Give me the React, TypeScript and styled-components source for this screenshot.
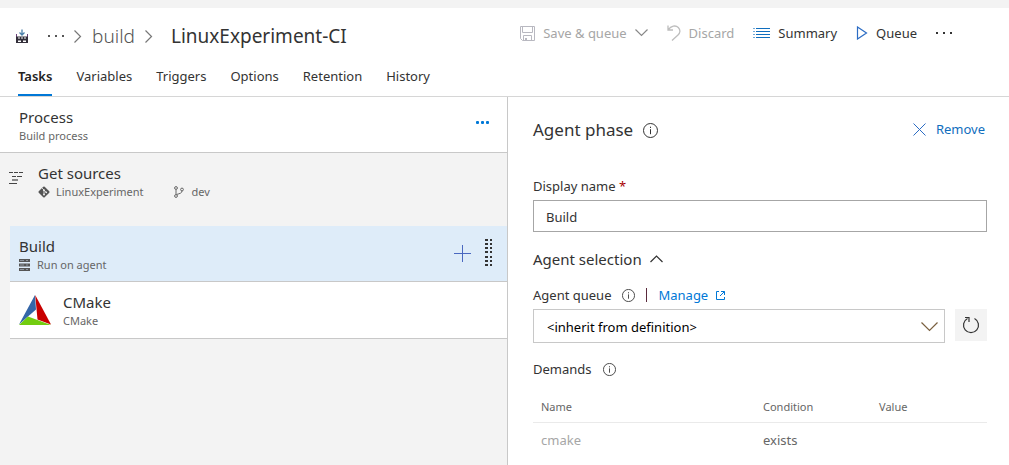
import React from "react";
import styled, { createGlobalStyle, css } from "styled-components";

const GlobalStyle = createGlobalStyle`
  *, *::before, *::after { box-sizing: border-box; }
  body {
    margin: 0;
    background: #f3f3f3;
    color: #333;
    font-family: "Segoe UI", "Noto Sans", "Open Sans", sans-serif;
    font-size: 13px;
    line-height: 20px;
  }
  button, input, select { font: inherit; color: inherit; }
  svg { display: block; flex: none; }
`;

const Page = styled.div`
  min-height: 100vh;
  display: flex;
  flex-direction: column;
  padding-top: 8px;
`;

const Header = styled.header`
  background: #fff;
  border-bottom: 1px solid #d6d6d6;
`;

const TitleBar = styled.div`
  display: flex;
  justify-content: space-between;
  align-items: center;
  height: 56px;
  padding: 0 57px 0 15px;
`;

const Breadcrumb = styled.nav`
  display: flex;
  align-items: center;
`;

const CrumbLink = styled.a`
  padding: 0 10px;
  color: #555;
  font-size: 19px;
  font-weight: 300;
  line-height: 28px;
  text-decoration: none;
`;

const Title = styled.h1`
  margin: 0 0 0 18px;
  font-size: 19px;
  font-weight: 400;
  line-height: 28px;
`;

const PlainButton = styled.button`
  display: flex;
  align-items: center;
  padding: 0;
  border: 0;
  background: none;
  cursor: pointer;
`;

const CrumbMore = styled(PlainButton)`
  margin: 0 10px 0 19px;
`;

const Toolbar = styled.div`
  display: flex;
  align-items: center;
  gap: 19px;
  padding-bottom: 6px;
`;

const ToolButton = styled(PlainButton)`
  gap: 8px;
  color: #333;
  &:disabled { color: #a6a6a6; cursor: default; }
`;

const Tabs = styled.nav`
  display: flex;
  gap: 24px;
  height: 32px;
  padding-left: 18px;
`;

const Tab = styled.a<{ $active?: boolean }>`
  padding-top: 2px;
  color: #333;
  text-decoration: none;
  ${(p) => p.$active && css`
    font-weight: 600;
    color: #222;
    border-bottom: 2px solid #0078d7;
  `}
`;

const Main = styled.main`
  flex: 1;
  display: grid;
  grid-template-columns: 508fr 501fr;
`;

const ProcessPane = styled.section`
  border-right: 1px solid #c8c8c8;
`;

const Row = styled.div<{ $selected?: boolean }>`
  display: flex;
  align-items: center;
  height: 56px;
  border-bottom: 1px solid #c8c8c8;
  background: ${(p) => (p.$selected ? "#deecf9" : "#fff")};
`;

const ProcessRow = styled(Row)`
  padding: 0 18px 0 19px;
`;

const ProcessMenu = styled(PlainButton)`
  padding-bottom: 6px;
`;

const SourcesRow = styled.div`
  display: flex;
  align-items: flex-start;
  height: 73px;
  padding: 9px 17px 0 9px;
  gap: 15px;
  > svg { margin-top: 10px; }
`;

const PhaseList = styled.div`
  padding-left: 10px;
`;

const PhaseRow = styled(Row)`
  padding: 0 14px 0 9px;
`;

const TaskRow = styled(PhaseRow)`
  height: 57px;
`;

const RowBody = styled.div`
  flex: 1;
  min-width: 0;
  padding-top: 1px;
`;

const RowTitle = styled.div`
  font-size: 15px;
  line-height: 20px;
`;

const RowMeta = styled.div`
  display: flex;
  align-items: center;
  gap: 6px;
  padding-top: 1px;
  color: #666;
  font-size: 11px;
  line-height: 16px;
`;

const Branch = styled.span`
  display: flex;
  align-items: center;
  gap: 8px;
  margin-left: 24px;
`;

const RowActions = styled.div`
  display: flex;
  align-items: center;
  gap: 14px;
`;

const TaskLogo = styled.div`
  margin-right: 12px;
`;

const Details = styled.section`
  padding: 21px 22px 0 25px;
  background: #fff;
`;

const DetailsHead = styled.div`
  display: flex;
  justify-content: space-between;
  align-items: center;
  height: 24px;
  margin-bottom: 34px;
`;

const HeadGroup = styled.div`
  display: flex;
  align-items: center;
  gap: 10px;
`;

const PhaseTitle = styled.h2`
  margin: 0;
  font-size: 17px;
  font-weight: 400;
  line-height: 24px;
`;

const RemoveButton = styled(PlainButton)`
  gap: 10px;
  padding: 0 2px 2px 0;
  color: #106ebe;
`;

const FieldLabel = styled.label`
  display: block;
`;

const Required = styled.span`
  color: #a80000;
`;

const TextInput = styled.input`
  display: block;
  width: 100%;
  height: 32px;
  margin-top: 4px;
  padding: 1px 12px 0;
  border: 1px solid #a6a6a6;
  border-radius: 0;
  background: #fff;
`;

const SectionToggle = styled(PlainButton)`
  gap: 8px;
  margin: 17px 0 16px;
  font-size: 15px;
  line-height: 20px;
`;

const LabelLine = styled.div`
  display: flex;
  align-items: center;
  gap: 11px;
`;

const Divider = styled.span`
  width: 1px;
  height: 14px;
  background: #5a2a3c;
`;

const ManageLink = styled.a`
  display: flex;
  align-items: center;
  gap: 8px;
  color: #0078d7;
  text-decoration: none;
`;

const QueueRow = styled.div`
  display: flex;
  gap: 10px;
  margin: 4px 0 16px;
`;

const SelectWrap = styled.div`
  position: relative;
  flex: 1;
  > svg {
    position: absolute;
    top: 13px;
    right: 7px;
    pointer-events: none;
  }
`;

const QueueSelect = styled.select`
  appearance: none;
  width: 100%;
  height: 34px;
  padding: 1px 32px 0 13px;
  border: 1px solid #c8c8c8;
  border-radius: 0;
  background: #fff;
  color: #000;
`;

const RefreshButton = styled(PlainButton)`
  justify-content: center;
  width: 32px;
  height: 32px;
  background: #f3f3f3;
`;

const DemandsTable = styled.table`
  width: 100%;
  margin-top: 12px;
  border-collapse: collapse;
  table-layout: fixed;
  text-align: left;
  color: #666;
`;

const HeadCell = styled.th<{ $narrow?: boolean }>`
  width: ${(p) => (p.$narrow ? "116px" : "auto")};
  height: 31px;
  padding: 2px 8px 0;
  border-bottom: 1px solid #eaeaea;
  font-size: 11px;
  font-weight: 400;
`;

const Cell = styled.td<{ $muted?: boolean }>`
  height: 35px;
  padding: 0 8px;
  color: ${(p) => (p.$muted ? "#a6a6a6" : "#666")};
`;

const BuildIcon = () => (
  <svg width="14" height="16" viewBox="0 0 14 16">
    <path d="M7 1.500v5M4.500 4.500L7 7l2.500-2.500" fill="none" stroke="#4a7fa8" strokeWidth="1.300" />
    <path d="M1.500 6v3" fill="none" stroke="#6b3f7a" />
    <path d="M12.500 6v3" fill="none" stroke="#6b3f7a" />
    <path fill="#332f3a" fillRule="evenodd" d="M1 8.500h12V15H1zM3 9.500v1h2v-1zM6 9.500v1h2v-1zM9 9.500v1h2v-1zM3 12.500v1.500h3v-1.500zM8 12.500v1.500h3v-1.500z" />
  </svg>
);

const Dots = ({ color, size = 2, gap = 7 }: { color: string; size?: number; gap?: number }) => (
  <svg width={gap * 2 + size} height="4" fill={color}>
    {[0, 1, 2].map((i) => (
      <rect key={i} x={i * gap} y="1" width={size} height={size} rx={size > 2 ? 1 : 0} />
    ))}
  </svg>
);

const Chevron = ({ dir, size, color = "#555" }: { dir: "right" | "down" | "up"; size: number; color?: string }) => {
  const h = size / 2;
  const shapes = {
    right: { w: h + 2, t: size + 1, d: `M.5 .5L${h + 0.5} ${h + 0.5}L.5 ${size + 0.5}` },
    down: { w: size + 1, t: h + 2, d: `M.5 .5L${h + 0.5} ${h + 0.5}L${size + 0.5} .5` },
    up: { w: size + 1, t: h + 2, d: `M.5 ${h + 1}L${h + 0.5} 1L${size + 0.5} ${h + 1}` },
  };
  const s = shapes[dir];
  return (
    <svg width={s.w} height={s.t} fill="none" stroke={color} strokeWidth="1.200">
      <path d={s.d} />
    </svg>
  );
};

const SaveIcon = () => (
  <svg width="15" height="15" viewBox="0 0 15 15" fill="none" stroke="#b8b8c0">
    <path d="M.5 .5h14v14H2.500l-2-2zM2.500 .5v6h10v-6M3.500 14.500v-5h8v5" />
    <path d="M5 12h2v2.500H5z" fill="#b8b8c0" stroke="none" />
  </svg>
);

const UndoIcon = () => (
  <svg width="14" height="16" viewBox="0 0 14 16" fill="none" stroke="#bdbdbd" strokeWidth="1.300">
    <path d="M1 .5v4.500h5M1.300 4.700C4 1 8.500-.2 11.300 2.500c2.500 2.600 1.800 5.500-.3 7.500L5 15.500" />
  </svg>
);

const ListIcon = () => (
  <svg width="17" height="12" viewBox="0 0 17 12" fill="#106ebe">
    {[0, 3, 6, 9].map((y) => (
      <g key={y}>
        <rect x="0" y={y + 1} width="2" height="1" opacity=".6" />
        <rect x="3" y={y + 1} width="14" height="1" />
      </g>
    ))}
  </svg>
);

const PlayIcon = () => (
  <svg width="12" height="14" viewBox="0 0 12 14" fill="none" stroke="#2b6cc4" strokeWidth="1.200">
    <path d="M1.500 1v12L10.500 7z" />
  </svg>
);

const SourcesIcon = () => (
  <svg width="14" height="12" viewBox="0 0 14 12" fill="none" stroke="#444">
    <path d="M0 .5h4M5 .5h4M10 .5h4M3 4.500h4M8 4.500h5" />
    <path d="M3 8h6" stroke="#888" strokeWidth="2" />
    <path d="M0 11.500h8" />
  </svg>
);

const GitIcon = () => (
  <svg width="12" height="12" viewBox="0 0 12 12">
    <rect x="1.800" y="1.800" width="8.400" height="8.400" rx="1" transform="rotate(45 6 6)" fill="#555" />
    <path d="M4 2L6 4v5M6 4.200L8.200 6.300" stroke="#f3f3f3" strokeWidth=".8" fill="none" />
    <circle cx="6" cy="4.200" r=".9" fill="#f3f3f3" />
    <circle cx="6" cy="8.500" r=".9" fill="#f3f3f3" />
    <circle cx="8.200" cy="6.300" r=".9" fill="#f3f3f3" />
  </svg>
);

const BranchIcon = () => (
  <svg width="10" height="12" viewBox="0 0 10 12" fill="none" stroke="#666">
    <circle cx="2" cy="2" r="1.400" />
    <circle cx="2" cy="10" r="1.400" />
    <circle cx="8" cy="3.500" r="1.400" />
    <path d="M2 3.500v5M8 5c0 2-2 2.500-5.500 3.500" />
  </svg>
);

const ServerIcon = () => (
  <svg width="12" height="12" viewBox="0 0 12 12" fill="#555">
    <path d="M0 0h11v3H0zM0 4.500h11v3H0zM0 9h11v3H0z" />
    <path d="M1 1h4v1H1zM7 1h2v1H7zM1 5.500h4v1H1zM7 5.500h2v1H7zM1 10h4v1H1zM7 10h2v1H7z" fill="#8d959d" />
  </svg>
);

const PlusIcon = () => (
  <svg width="17" height="17" viewBox="0 0 17 17" stroke="#4a68c0">
    <path d="M8.500 0v17M0 8.500h17" />
  </svg>
);

const GripIcon = () => (
  <svg width="8" height="29" viewBox="0 0 8 29" fill="#333">
    {[0, 1, 2, 3, 4, 5, 6].map((i) => (
      <g key={i}>
        <rect x="0" y={i * 4 + (i > 3 ? 1 : 0)} width="3" height="2" />
        <rect x="5" y={i * 4 + (i > 3 ? 1 : 0)} width="2" height="2" />
      </g>
    ))}
  </svg>
);

const CMakeLogo = () => (
  <svg width="32" height="30" viewBox="0 0 32 30">
    <path d="M16 0L0 29.500 9 21.500 17 14.500z" fill="#3366a8" />
    <path d="M16.200 0L32 29.500 18.500 24.500z" fill="#c80000" />
    <path d="M0 30L9 21.500 32 30z" fill="#72cc10" />
  </svg>
);

const InfoIcon = ({ size }: { size: number }) => (
  <svg width={size} height={size} viewBox="0 0 15 15" fill="none" stroke="#333">
    <circle cx="7.500" cy="7.500" r="7" />
    <path d="M7.500 6.200v5M7.500 3.700v1.300" />
  </svg>
);

const CloseIcon = () => (
  <svg width="13" height="13" viewBox="0 0 13 13" stroke="#2b6cc4">
    <path d="M.5 .5l12 12M12.500 .5l-12 12" />
  </svg>
);

const ExternalIcon = () => (
  <svg width="9" height="9" viewBox="0 0 9 9" fill="none" stroke="#0078d7">
    <path d="M3 .5H.5v8h8V6M5 .5h3.500V4M8.500 .5L4 5" />
  </svg>
);

const RefreshIcon = () => (
  <svg width="18" height="18" viewBox="0 0 18 18" fill="none" stroke="#333" strokeWidth="1.200">
    <path d="M12.500 2.500A7.500 7.500 0 1 1 5.500 2.500M3 1.500h4V6" />
  </svg>
);

const tabs = ["Tasks", "Variables", "Triggers", "Options", "Retention", "History"];

export default function App() {
  return (
    <>
      <GlobalStyle />
      <Page>
        <Header>
          <TitleBar>
            <Breadcrumb aria-label="Breadcrumb">
              <BuildIcon />
              <CrumbMore type="button" aria-label="More levels"><Dots color="#555" /></CrumbMore>
              <Chevron dir="right" size={12} color="#777" />
              <CrumbLink href="#build">build</CrumbLink>
              <Chevron dir="right" size={12} color="#777" />
              <Title>LinuxExperiment-CI</Title>
            </Breadcrumb>
            <Toolbar>
              <ToolButton type="button" disabled>
                <SaveIcon />Save &amp; queue<Chevron dir="down" size={12} color="#888" />
              </ToolButton>
              <ToolButton type="button" disabled><UndoIcon />Discard</ToolButton>
              <ToolButton type="button"><ListIcon />Summary</ToolButton>
              <ToolButton type="button"><PlayIcon />Queue</ToolButton>
              <ToolButton type="button" aria-label="More actions"><Dots color="#333" /></ToolButton>
            </Toolbar>
          </TitleBar>
          <Tabs aria-label="Definition">
            {tabs.map((name, i) => (
              <Tab key={name} href={`#${name.toLowerCase()}`} $active={i === 0}>{name}</Tab>
            ))}
          </Tabs>
        </Header>
        <Main>
          <ProcessPane>
            <ProcessRow>
              <RowBody>
                <RowTitle>Process</RowTitle>
                <RowMeta>Build process</RowMeta>
              </RowBody>
              <ProcessMenu type="button" aria-label="Process actions">
                <Dots color="#0078d7" size={3} gap={5} />
              </ProcessMenu>
            </ProcessRow>
            <SourcesRow>
              <SourcesIcon />
              <RowBody>
                <RowTitle>Get sources</RowTitle>
                <RowMeta>
                  <GitIcon />LinuxExperiment
                  <Branch><BranchIcon />dev</Branch>
                </RowMeta>
              </RowBody>
            </SourcesRow>
            <PhaseList>
              <PhaseRow $selected>
                <RowBody>
                  <RowTitle>Build</RowTitle>
                  <RowMeta><ServerIcon />Run on agent</RowMeta>
                </RowBody>
                <RowActions>
                  <PlainButton type="button" aria-label="Add task"><PlusIcon /></PlainButton>
                  <GripIcon />
                </RowActions>
              </PhaseRow>
              <TaskRow>
                <TaskLogo><CMakeLogo /></TaskLogo>
                <RowBody>
                  <RowTitle>CMake</RowTitle>
                  <RowMeta>CMake</RowMeta>
                </RowBody>
              </TaskRow>
            </PhaseList>
          </ProcessPane>
          <Details>
            <DetailsHead>
              <HeadGroup>
                <PhaseTitle>Agent phase</PhaseTitle>
                <InfoIcon size={15} />
              </HeadGroup>
              <RemoveButton type="button"><CloseIcon />Remove</RemoveButton>
            </DetailsHead>
            <FieldLabel htmlFor="display-name">Display name <Required>*</Required></FieldLabel>
            <TextInput id="display-name" defaultValue="Build" />
            <SectionToggle type="button" aria-expanded="true">
              Agent selection<Chevron dir="up" size={12} color="#333" />
            </SectionToggle>
            <LabelLine>
              <FieldLabel htmlFor="agent-queue">Agent queue</FieldLabel>
              <InfoIcon size={13} />
              <Divider />
              <ManageLink href="#manage">Manage<ExternalIcon /></ManageLink>
            </LabelLine>
            <QueueRow>
              <SelectWrap>
                <QueueSelect id="agent-queue">
                  <option>&lt;inherit from definition&gt;</option>
                </QueueSelect>
                <Chevron dir="down" size={16} color="#7a6040" />
              </SelectWrap>
              <RefreshButton type="button" aria-label="Refresh"><RefreshIcon /></RefreshButton>
            </QueueRow>
            <LabelLine>Demands<InfoIcon size={13} /></LabelLine>
            <DemandsTable>
              <thead>
                <tr>
                  <HeadCell>Name</HeadCell>
                  <HeadCell $narrow>Condition</HeadCell>
                  <HeadCell $narrow>Value</HeadCell>
                </tr>
              </thead>
              <tbody>
                <tr>
                  <Cell $muted>cmake</Cell>
                  <Cell>exists</Cell>
                  <Cell />
                </tr>
              </tbody>
            </DemandsTable>
          </Details>
        </Main>
      </Page>
    </>
  );
}
